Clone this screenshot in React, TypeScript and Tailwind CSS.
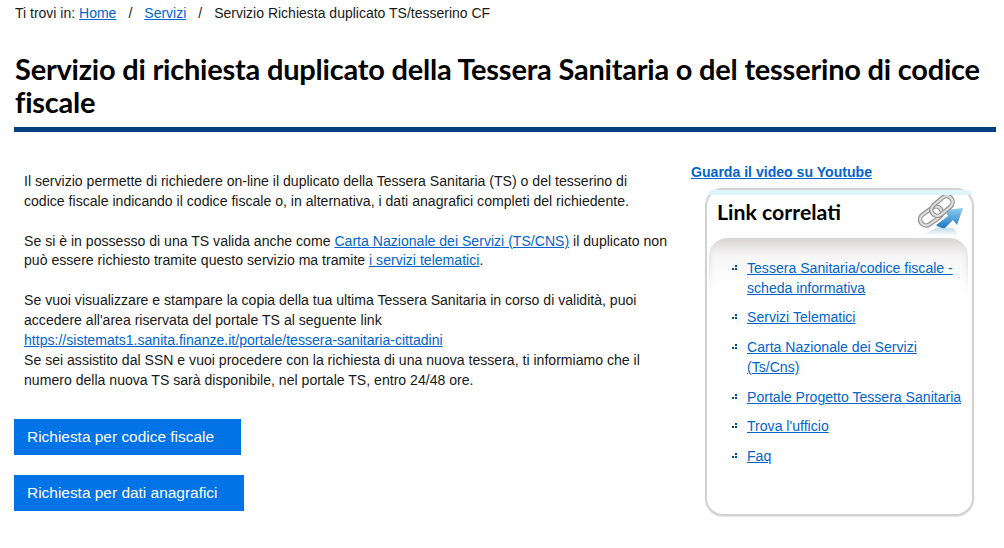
const links = [
  { label: "Tessera Sanitaria/codice fiscale - scheda informativa", mb: "mb-[9px]" },
  { label: "Servizi Telematici", mb: "mb-[10px]" },
  { label: "Carta Nazionale dei Servizi (Ts/Cns)", mb: "mb-[10px]" },
  { label: "Portale Progetto Tessera Sanitaria", mb: "mb-[9px]" },
  { label: "Trova l'ufficio", mb: "mb-[10px]" },
  { label: "Faq", mb: "mb-0" },
];

function Bullet() {
  return (
    <svg width="5" height="5" viewBox="0 0 5 5" className="absolute left-[-15px] top-[7px]">
      <rect x="0" y="3" width="2" height="2" fill="#004b8d" />
      <rect x="3" y="0" width="2" height="2" fill="#004b8d" />
      <rect x="3" y="3" width="2" height="2" fill="#004b8d" />
    </svg>
  );
}

function ChainIcon() {
  return (
    <svg width="46" height="42" viewBox="0 0 46 42" className="absolute left-[211px] top-[5px]">
      <defs>
        <linearGradient id="arrowFill" x1="0" y1="0" x2="0" y2="1">
          <stop offset="0" stopColor="#8fd0f2" />
          <stop offset="1" stopColor="#1f78c1" />
        </linearGradient>
        <linearGradient id="shine" x1="0" y1="0" x2="0" y2="1">
          <stop offset="0" stopColor="#c4dcec" />
          <stop offset="1" stopColor="#ffffff" />
        </linearGradient>
      </defs>
      <path d="M4 40 L18 33 L36 33 L40 41 Z" fill="url(#shine)" />
      <path d="M18 30 L30 21 L27 15 L45 13 L39 30 L35 25 L27 33 Q22 34 18 30 Z" fill="url(#arrowFill)" />
      <g fill="none">
        <rect x="1" y="15" width="24" height="12" rx="6" transform="rotate(-35 13 21)" stroke="#929292" strokeWidth="4.5" />
        <rect x="1" y="15" width="24" height="12" rx="6" transform="rotate(-35 13 21)" stroke="#dedede" strokeWidth="2.2" />
        <rect x="12" y="5" width="24" height="12" rx="6" transform="rotate(-40 24 11)" stroke="#929292" strokeWidth="4.5" />
        <rect x="12" y="5" width="24" height="12" rx="6" transform="rotate(-40 24 11)" stroke="#dedede" strokeWidth="2.2" />
      </g>
    </svg>
  );
}

export default function App() {
  return (
    <div className="w-[1004px] h-[548px] overflow-hidden bg-white px-[14px] text-[14px] text-[#191919] font-['Liberation_Sans',Arial,sans-serif]">
      <div className="pt-[5px] pl-px leading-4 h-[21px] whitespace-pre">
        Ti trovi in: <a href="#" className="text-[#0066cc] underline">Home</a>
        <span className="mx-[12px]">/</span>
        <a href="#" className="text-[#0066cc] underline">Servizi</a>
        <span className="mx-[12px]">/</span>
        <span>Servizio Richiesta duplicato TS/tesserino CF</span>
      </div>

      <h1 className="mt-[31px] pl-px w-[982px] border-b-[5px] border-[#004080] pb-[9px] text-[29px] leading-[33px] font-bold tracking-[-0.22px] text-black font-['Lato',sans-serif]">
        Servizio di richiesta duplicato della Tessera Sanitaria o del tesserino di codice fiscale
      </h1>

      <div className="flex mt-[31px]">
        <div className="w-[677px] shrink-0">
          <div className="w-[654px] pl-[10px] pt-[9px] text-[14.08px] leading-[19.87px]">
            <p>
              Il servizio permette di richiedere on-line il duplicato della Tessera Sanitaria (TS) o del tesserino di codice fiscale indicando il codice fiscale o, in alternativa, i dati anagrafici completi del richiedente.
            </p>
            <p className="mt-[19.87px]">
              Se si è in possesso di una TS valida anche come <a href="#" className="text-[#0066cc] underline">Carta Nazionale dei Servizi (TS/CNS)</a> il duplicato non può essere richiesto tramite questo servizio ma tramite <a href="#" className="text-[#0066cc] underline">i servizi telematici</a>.
            </p>
            <p className="mt-[19.87px]">
              Se vuoi visualizzare e stampare la copia della tua ultima Tessera Sanitaria in corso di validità, puoi accedere all'area riservata del portale TS al seguente link<br />
              <a href="#" className="text-[#0066cc] underline">https://sistemats1.sanita.finanze.it/portale/tessera-sanitaria-cittadini</a><br />
              Se sei assistito dal SSN e vuoi procedere con la richiesta di una nuova tessera, ti informiamo che il numero della nuova TS sarà disponibile, nel portale TS, entro 24/48 ore.
            </p>
          </div>
          <div className="mt-[28px] flex flex-col items-start gap-[20px]">
            <a href="#" className="h-[36px] w-[227px] bg-[#0073e6] pl-[13px] text-[15.45px] leading-[36px] text-white">Richiesta per codice fiscale</a>
            <a href="#" className="h-[36px] w-[230px] bg-[#0073e6] pl-[13px] text-[15.45px] leading-[36px] text-white">Richiesta per dati anagrafici</a>
          </div>
        </div>

        <div className="w-[285px] shrink-0 pt-[1px]">
          <a href="#" className="block text-[14.08px] leading-4 font-bold text-[#0066cc] underline">Guarda il video su Youtube</a>
          <div className="relative ml-[14px] mt-[8px] h-[328px] w-[269px] rounded-[18px] border-2 border-[#d2d2d2] bg-white shadow-[0_1px_1px_#e4e4e4]">
            <div className="h-[5px] rounded-t-[16px] bg-[#dff4fd]" />
            <div className="pl-[10px] pt-[2px] text-[21.3px] leading-[30px] font-bold text-black font-['Lato',sans-serif]">Link correlati</div>
            <ChainIcon />
            <div className="ml-[2px] mr-[4px] mt-[11px] h-[60px] rounded-t-[18px] bg-gradient-to-b from-[#d9d4d4] via-[#f7f6f6] via-30% to-white shadow-[inset_4px_0_5px_-3px_#dddddd,inset_-4px_0_5px_-3px_#dddddd] [mask-image:linear-gradient(to_bottom,black_40%,transparent)]" />
            <ul className="absolute left-[40px] top-[68px] w-[222px] text-[14.08px] leading-[20px] text-[#0066cc]">
              {links.map((link) => (
                <li key={link.label} className={`relative ${link.mb}`}>
                  <Bullet />
                  <a href="#" className="underline">{link.label}</a>
                </li>
              ))}
            </ul>
          </div>
        </div>
      </div>
    </div>
  );
}
